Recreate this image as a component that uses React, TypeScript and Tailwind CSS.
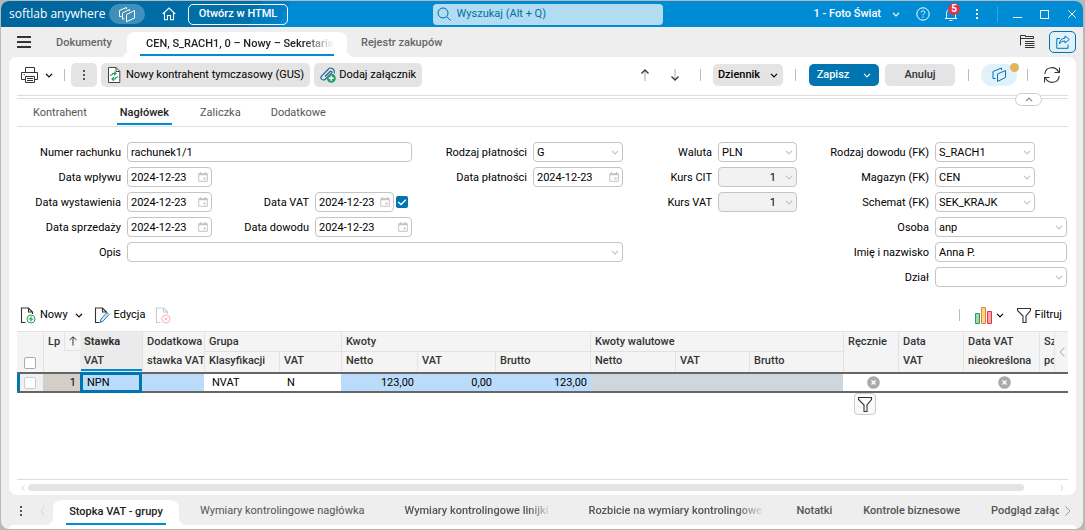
import type { ReactNode } from "react";
import clsx from "clsx";

const Chevron = ({ className = "" }: { className?: string }) => (
    <svg viewBox="0 0 8 5" className={clsx("w-2 h-[5px] shrink-0", className)} fill="none" stroke="currentColor" strokeWidth="1.2">
        <path d="M1 .8 4 3.8 7 .8" />
    </svg>
);

const Layers = ({ className = "" }: { className?: string }) => (
    <svg viewBox="0 0 18 17" className={clsx("w-[18px] h-[17px]", className)} fill="none" stroke="currentColor" strokeWidth="1">
        <path d="M3.500 10.500H1.500V4.500L8.500 1.500V3" />
        <path d="M6.500 13H4.500V7L11.500 3.500V5" />
        <path d="M8.500 8.500 16.500 4.500V12L8.500 15.800Z" />
    </svg>
);

const Funnel = () => (
    <svg viewBox="0 0 16 17" className="w-4 h-[17px]" fill="none" stroke="#333" strokeWidth="1.1">
        <path d="M1.500 1.500H14.500V3.500L10 9V15.500H7V9L1.500 3.500Z" />
    </svg>
);

const Calendar = () => (
    <svg viewBox="0 0 10 10" className="pointer-events-none absolute right-1 top-[5px] size-[10px]" fill="none" stroke="#c4c4c4">
        <path d="M.7 1.700H9.300V9.300H.7Z" />
        <path d="M.7 2.500H9.300" strokeWidth="1.500" />
        <path d="M2.500 0V2M7.500 0V2" />
        <path d="M5.500 5.500H7.500V7.500H5.500Z" fill="#c4c4c4" stroke="none" />
    </svg>
);

const Clear = () => (
    <svg viewBox="0 0 13 13" className="mx-auto size-[13px]">
        <circle cx="6.5" cy="6.5" r="6.3" fill="#aaa" />
        <path d="M4.500 4.500 8.500 8.500M8.500 4.500 4.500 8.500" stroke="#fff" strokeWidth="1.4" />
    </svg>
);

const Page = ({ muted = false, children }: { muted?: boolean; children?: ReactNode }) => (
    <svg viewBox="0 0 16 17" className="w-4 h-[17px] shrink-0" fill="none">
        <path d="M5.500 15.500H1.500V1H8.500L12.500 5V7M8.500 1V5H12.500" stroke={muted ? "#ccc" : "#333"} strokeWidth="1.1" />
        {children}
    </svg>
);

const Separator = ({ className = "" }: { className?: string }) => (
    <span className={clsx("h-3 w-px shrink-0 bg-[#bbb]", className)} />
);

const Label = ({ id, className, children }: { id: string; className: string; children: string }) => (
    <label htmlFor={id} className={clsx("pt-px pr-[6px] text-right leading-5 whitespace-nowrap", className)}>{children}</label>
);

const box = "block h-5 w-full rounded-[4px] border border-[#c4c4c4] px-[3px] text-black outline-none";

const TextField = ({ id, value, className }: { id: string; value: string; className: string }) => (
    <input id={id} defaultValue={value} className={clsx(box, "bg-white", className)} />
);

const DateField = ({ id, className }: { id: string; className: string }) => (
    <div className={clsx("relative", className)}>
        <input id={id} defaultValue="2024-12-23" className={clsx(box, "bg-white")} />
        <Calendar />
    </div>
);

const SelectField = ({ id, value, className, disabled = false }: { id: string; value: string; className: string; disabled?: boolean }) => (
    <div className={clsx("relative", className)}>
        <select id={id} disabled={disabled} className={clsx(box, "appearance-none pt-px", disabled ? "bg-[#f2f2f2] pr-5 opacity-100 [text-align-last:right]" : "bg-white")}>
            <option>{value}</option>
        </select>
        <Chevron className="pointer-events-none absolute right-1 top-2 text-[#c4c4c4]" />
    </div>
);

const TitleBar = () => (
    <header className="flex h-[26px] shrink-0 items-center bg-[linear-gradient(115deg,#00649b_0,#0071ab_235px,#007abb_236px,#0082c8_262px,#008cd5_263px)] pr-[7px] pl-2 text-white">
        <span className="w-[100px] font-['Open_Sans',sans-serif] text-xs whitespace-nowrap">softlab anywhere</span>
        <button aria-label="Moduły" className="flex h-5 w-9 items-center justify-center rounded-full bg-white/25">
            <Layers />
        </button>
        <a href="#" aria-label="Start" className="ml-[17px]">
            <svg viewBox="0 0 14 14" className="size-[14px]" fill="none" stroke="currentColor" strokeWidth="1.1">
                <path d="M.7 7 7 1 13.300 7M2.500 5.500V12.800H5.500V8.500H8.500V12.800H11.500V5.500" />
            </svg>
        </a>
        <button className="ml-3 h-[21px] w-[100px] rounded-[5px] border border-white font-medium">Otwórz w HTML</button>
        <div className="mr-[151px] ml-auto flex h-[21px] w-[230px] items-center rounded-[4px] bg-[#b1dcf2] pl-1 text-[#006fa8]">
            <svg viewBox="0 0 14 14" className="size-[14px] shrink-0" fill="none" stroke="currentColor" strokeWidth="1">
                <circle cx="6" cy="6" r="5" />
                <path d="M9.700 9.700 13.500 13.500" />
            </svg>
            <input aria-label="Wyszukaj" placeholder="Wyszukaj (Alt + Q)" className="ml-[6px] w-full bg-transparent outline-none placeholder:text-[#006fa8]" />
        </div>
        <button className="flex items-center gap-[11px] font-medium">
            1 - Foto Świat
            <Chevron />
        </button>
        <button aria-label="Pomoc" className="ml-4">
            <svg viewBox="0 0 14 14" className="size-[14px]" fill="none" stroke="currentColor">
                <circle cx="7" cy="7" r="6.2" />
                <path d="M5.200 5.500C5.200 3.200 8.800 3.200 8.800 5.300 8.800 6.800 7 6.800 7 8.300M7 9.500V10.700" />
            </svg>
        </button>
        <button aria-label="Powiadomienia" className="relative ml-[14px]">
            <svg viewBox="0 0 14 16" className="h-4 w-[14px]" fill="none" stroke="currentColor">
                <path d="M1 12.500H13M2.500 12.500V7.500C2.500 4.500 4.500 3 7 3S11.500 4.500 11.500 7.500V12.500M5.500 14.500H8.500" />
            </svg>
            <span className="absolute -top-[3px] left-[4px] flex size-3 items-center justify-center rounded-full bg-[#dc3545] text-[10px] font-bold">5</span>
        </button>
        <button aria-label="Więcej" className="ml-[17px]">
            <svg viewBox="0 0 4 12" className="h-3 w-1" fill="currentColor">
                <path d="M1 1H3V3H1ZM1 5H3V7H1ZM1 9H3V11H1Z" />
            </svg>
        </button>
        <span className="ml-[18px] h-4 w-px bg-white/20" />
        <button aria-label="Minimalizuj" className="ml-[15px] h-2 w-[9px] border-b border-white" />
        <button aria-label="Maksymalizuj" className="ml-[18px] size-[9px] border border-white" />
        <button aria-label="Zamknij" className="ml-[19px]">
            <svg viewBox="0 0 8 8" className="size-2" stroke="currentColor">
                <path d="M.3.3 7.700 7.700M7.700.3.3 7.700" />
            </svg>
        </button>
    </header>
);

const flare = "before:absolute before:-left-2 before:bottom-0 before:size-2 before:rounded-br-lg before:bg-[#eee] before:shadow-[4px_4px_0_0_#fff] after:absolute after:-right-2 after:bottom-0 after:size-2 after:rounded-bl-lg after:bg-[#eee] after:shadow-[-4px_4px_0_0_#fff]";
const fade = "overflow-hidden [mask-image:linear-gradient(to_right,#000_84%,transparent)]";

const DocumentTabs = () => (
    <nav className="flex h-[30px] shrink-0 items-center pr-[7px] pl-4 font-medium text-[#666]">
        <button aria-label="Menu" className="flex w-[14px] flex-col gap-[3px]">
            <span className="h-[2px] w-full bg-[#333]" />
            <span className="h-[2px] w-full bg-[#333]" />
            <span className="h-[2px] w-full bg-[#333]" />
        </button>
        <a href="#" className="ml-[25px] w-[71px] pt-[2px]">Dokumenty</a>
        <div className={clsx("relative h-[25px] w-[220px] self-end rounded-t-lg bg-white px-[13px]", flare)}>
            <a href="#" className={clsx("relative z-10 block h-[22px] pl-[6px] leading-[23px] whitespace-nowrap text-[#222]", fade)}>CEN, S_RACH1, 0 – Nowy – Sekretariat</a>
            <span className="relative z-10 block h-[2px] bg-[#008cd5]" />
        </div>
        <a href="#" className="ml-[14px] pt-[2px]">Rejestr zakupów</a>
        <button aria-label="Lista okien" className="ml-auto">
            <svg viewBox="0 0 15 14" className="h-[14px] w-[15px]" fill="none" stroke="#333">
                <path d="M.5 10.500V.5H5.500V2M.5 3.500H13.500V1.500H5.500M5 6.500H14.500M5 8.500H14.500M5 10.500H14.500M5 12.500H14.500" />
            </svg>
        </button>
        <button aria-label="Udostępnij" className="ml-[14px] flex h-[22px] w-[27px] items-center justify-center rounded-[5px] border border-[#0075b0] bg-[#e0f1fa] text-[#0075b0]">
            <svg viewBox="0 0 14 14" className="size-[14px]" fill="none" stroke="currentColor">
                <path d="M4 3.500H.8V13.300H12V9.500M9 1 13.300 4.500 9 8V6C6 6 4.500 7 3.500 9 3.500 5.500 5.500 3.300 9 3.200Z" />
            </svg>
        </button>
    </nav>
);

const gray = "flex items-center justify-center rounded-[5px] bg-[#e4e4e4]";

const Toolbar = () => (
    <div className="flex h-9 items-center pr-4 pl-3 text-black">
        <button aria-label="Drukuj" className="flex items-center gap-[7px]">
            <svg viewBox="0 0 17 16" className="h-4 w-[17px]" fill="none" stroke="#333">
                <path d="M4.500 5.500V.5H13.500V5.500M4.500 12.500H.5V5.500H16.500V12.500H13.500M4.500 9.500H13.500V15.500H4.500ZM6 11.500H12M6 13.500H12" />
                <path d="M2.500 7.500H4" stroke="#0086d0" />
            </svg>
            <Chevron />
        </button>
        <Separator className="ml-[11px]" />
        <button aria-label="Więcej" className={clsx(gray, "ml-[6px] h-6 w-[26px]")}>
            <svg viewBox="0 0 2 10" className="h-[10px] w-[2px]" fill="#555">
                <path d="M0 0H2V2H0ZM0 4H2V6H0ZM0 8H2V10H0Z" />
            </svg>
        </button>
        <button className={clsx(gray, "ml-1 h-6 gap-[5px] px-[6px] whitespace-nowrap")}>
            <svg viewBox="0 0 14 16" className="h-4 w-[14px] shrink-0" fill="none">
                <path d="M1.500.5H9L12.800 4.300V15.500H1.500Z" fill="#fff" stroke="#444" />
                <path d="M9 .5V4.500H12.800" stroke="#444" />
                <path d="M8.500 5 5.500 6 6 8.500M5.300 7.800 8.500 8.800M5.500 12.800 8.800 12 8.300 9.500M9 10.200 5.800 9.200" stroke="none" />
                <path d="M5.500 7.500V6.500H8.500M7 4.800 9 6.500 7 8.200M8.500 10.500V12H5.500M7 10.200 5 12 7 13.700M3 8.500 5.500 7.500M11 9.700 8.500 10.700" stroke="#2a9d69" strokeWidth="1.200" />
            </svg>
            Nowy kontrahent tymczasowy (GUS)
        </button>
        <button className={clsx(gray, "ml-1 h-6 gap-[3px] px-[6px] whitespace-nowrap")}>
            <svg viewBox="0 0 16 16" className="size-4 shrink-0" fill="none">
                <path d="M5 9.500 10 4.500C11.500 3.500 12.500 5 11.500 6L5.500 12C3 14.500-.5 11.500 1.500 9L8.500 2C11-.5 15.500 2.500 14 6.500" stroke="#1d5f9e" strokeWidth="1.100" />
                <circle cx="11.300" cy="11.300" r="4.500" fill="#2a9d69" />
                <path d="M11.300 8.800V13.800M8.800 11.300H13.800" stroke="#fff" strokeWidth="1.400" />
            </svg>
            Dodaj załącznik
        </button>
        <button aria-label="Poprzedni" className="ml-auto">
            <svg viewBox="0 0 8 12" className="h-3 w-2" fill="none" stroke="#333">
                <path d="M4 1V12" stroke="#aaa" />
                <path d="M.5 4.500 4 1 7.500 4.500" strokeWidth="1.300" />
            </svg>
        </button>
        <button aria-label="Następny" className="ml-[22px]">
            <svg viewBox="0 0 8 12" className="h-3 w-2" fill="none" stroke="#333">
                <path d="M4 0V11" stroke="#aaa" />
                <path d="M.5 7.500 4 11 7.500 7.500" strokeWidth="1.300" />
            </svg>
        </button>
        <Separator className="ml-[21px]" />
        <button className={clsx(gray, "ml-3 h-[22px] w-[70px] gap-[10px] font-medium")}>
            Dziennik
            <Chevron />
        </button>
        <Separator className="ml-3" />
        <button className="ml-[13px] flex h-[22px] w-[70px] items-center justify-center gap-[14px] rounded-[5px] bg-[#0075b0] font-medium text-white">
            Zapisz
            <Chevron />
        </button>
        <button className={clsx(gray, "ml-[6px] h-[22px] w-[70px] font-medium text-[#333]")}>Anuluj</button>
        <Separator className="ml-[13px]" />
        <button aria-label="Panele" className="relative ml-3 flex h-[22px] w-9 items-center justify-center rounded-full bg-[#e0f1fa] text-[#0075b0]">
            <svg viewBox="0 0 15 16" className="h-4 w-[15px]" fill="none" stroke="currentColor">
                <path d="M3.500 11.500H1V4.500L9.500 1V3M5.500 7 13.500 3.500V10.500L5.500 14.500Z" />
            </svg>
            <span className="absolute -top-px -right-[2px] size-[9px] rounded-full bg-[#e3b45c]" />
        </button>
        <Separator className="ml-[10px]" />
        <button aria-label="Odśwież" className="ml-4">
            <svg viewBox="0 0 16 16" className="size-4" fill="none" stroke="#333" strokeWidth="1.100">
                <path d="M.8 7C1.500-.5 11.500-1.500 14.500 5M15.500.5V5.500H10.500M15.200 9C14.500 16.500 4.500 17.500 1.500 11M.5 15.500V10.500H5.500" />
            </svg>
        </button>
    </div>
);

const SectionTabs = () => (
    <div className="relative mx-2 mt-[2px] border-t border-[#ddd] pt-[2px]">
        <nav className="flex h-[29px] items-stretch border-y border-[#ddd] pl-4 leading-7 text-[#555]">
            <a href="#">Kontrahent</a>
            <a href="#" className="ml-[30px] block h-[26px] border-b-2 border-[#008cd5] px-[3px] font-medium text-[#222]">Nagłówek</a>
            <a href="#" className="ml-7">Zaliczka</a>
            <a href="#" className="ml-[30px]">Dodatkowe</a>
        </nav>
        <button aria-label="Zwiń" className="absolute -top-[3px] right-[26px] flex h-[13px] w-[27px] items-center justify-center rounded-full border border-[#ccc] bg-white">
            <Chevron className="rotate-180 text-[#888]" />
        </button>
    </div>
);

const HeaderForm = () => (
    <form className="mr-[9px] ml-2 mt-[15px] grid auto-rows-[20px] grid-cols-[110px_85px_103px_97px_121px_90px_95px_79px_minmax(0,1fr)_132px] gap-y-[5px] text-black">
        <Label id="number" className="col-start-1 row-start-1">Numer rachunku</Label>
        <TextField id="number" value="rachunek1/1" className="col-span-3 col-start-2 row-start-1" />
        <Label id="received" className="col-start-1 row-start-2">Data wpływu</Label>
        <DateField id="received" className="col-start-2 row-start-2" />
        <Label id="issued" className="col-start-1 row-start-3">Data wystawienia</Label>
        <DateField id="issued" className="col-start-2 row-start-3" />
        <Label id="sold" className="col-start-1 row-start-4">Data sprzedaży</Label>
        <DateField id="sold" className="col-start-2 row-start-4" />
        <Label id="description" className="col-start-1 row-start-5">Opis</Label>
        <SelectField id="description" value="" className="col-span-5 col-start-2 row-start-5" />

        <Label id="vatDate" className="col-start-3 row-start-3">Data VAT</Label>
        <div className="col-start-4 row-start-3 flex items-center gap-[2px]">
            <DateField id="vatDate" className="w-[79px]" />
            <span className="relative size-3">
                <input type="checkbox" defaultChecked aria-label="Data VAT aktywna" className="block size-3 appearance-none rounded-[2px] bg-[#0075b0]" />
                <svg viewBox="0 0 12 12" className="pointer-events-none absolute inset-0 size-3" fill="none" stroke="#fff" strokeWidth="1.400">
                    <path d="M2.200 6 5 8.500 9.800 3.700" />
                </svg>
            </span>
        </div>
        <Label id="proofDate" className="col-start-3 row-start-4">Data dowodu</Label>
        <DateField id="proofDate" className="col-start-4 row-start-4" />

        <Label id="payment" className="col-start-5 row-start-1">Rodzaj płatności</Label>
        <SelectField id="payment" value="G" className="col-start-6 row-start-1" />
        <Label id="paymentDate" className="col-start-5 row-start-2">Data płatności</Label>
        <DateField id="paymentDate" className="col-start-6 row-start-2" />

        <Label id="currency" className="col-start-7 row-start-1">Waluta</Label>
        <SelectField id="currency" value="PLN" className="col-start-8 row-start-1" />
        <Label id="citRate" className="col-start-7 row-start-2">Kurs CIT</Label>
        <SelectField id="citRate" value="1" disabled className="col-start-8 row-start-2" />
        <Label id="vatRate" className="col-start-7 row-start-3">Kurs VAT</Label>
        <SelectField id="vatRate" value="1" disabled className="col-start-8 row-start-3" />

        <Label id="proofType" className="col-start-9 row-start-1">Rodzaj dowodu (FK)</Label>
        <SelectField id="proofType" value="S_RACH1" className="col-start-10 row-start-1 w-[100px]" />
        <Label id="store" className="col-start-9 row-start-2">Magazyn (FK)</Label>
        <SelectField id="store" value="CEN" className="col-start-10 row-start-2 w-[100px]" />
        <Label id="schema" className="col-start-9 row-start-3">Schemat (FK)</Label>
        <SelectField id="schema" value="SEK_KRAJK" className="col-start-10 row-start-3 w-[100px]" />
        <Label id="person" className="col-start-9 row-start-4">Osoba</Label>
        <SelectField id="person" value="anp" className="col-start-10 row-start-4" />
        <Label id="fullName" className="col-start-9 row-start-5">Imię i nazwisko</Label>
        <TextField id="fullName" value="Anna P." className="col-start-10 row-start-5" />
        <Label id="department" className="col-start-9 row-start-6">Dział</Label>
        <SelectField id="department" value="" className="col-start-10 row-start-6" />
    </form>
);

const GridToolbar = () => (
    <div className="mx-2 mt-4 flex h-6 items-center pr-[6px] pl-[3px] text-black">
        <button className="flex items-center gap-1">
            <Page>
                <circle cx="11" cy="12" r="4" stroke="#2a9d57" />
                <path d="M11 9.500V14.500M8.500 12H13.500" stroke="#2a9d57" strokeWidth="1.200" />
            </Page>
            Nowy
            <Chevron className="ml-[3px]" />
        </button>
        <button className="ml-[11px] flex items-center gap-1">
            <Page>
                <path d="M6 15.500 7 12 13 5.500 15 7.500 9 14.200Z" stroke="#1f77c0" fill="#cfe8fa" />
            </Page>
            Edycja
        </button>
        <button aria-label="Usuń" disabled className="ml-[10px]">
            <Page muted>
                <circle cx="11" cy="12" r="4" stroke="#f5b5b5" />
                <path d="M9.500 10.500 12.500 13.500M12.500 10.500 9.500 13.500" stroke="#f5b5b5" />
            </Page>
        </button>
        <Separator className="ml-auto" />
        <button aria-label="Wykres" className="ml-[15px] flex items-center gap-1">
            <svg viewBox="0 0 17 17" className="size-[17px]">
                <path d="M.5 6.500H4.500V16.500H.5Z" fill="#9ed8b2" stroke="#2a9d57" />
                <path d="M6.500.5H10.500V16.500H6.500Z" fill="#fbd38a" stroke="#e8833a" />
                <path d="M12.500 4.500H16.500V16.500H12.500Z" fill="#f6a6ab" stroke="#dc3545" />
            </svg>
            <Chevron />
        </button>
        <button className="ml-3 flex items-center gap-[3px]">
            <Funnel />
            Filtruj
        </button>
    </div>
);

const head = "overflow-hidden border-t border-l border-[#e2e2e2] p-0 text-left font-medium whitespace-nowrap";
const th = clsx(head, "align-top");

const StackedHead = ({ lines, className = "" }: { lines: string[]; className?: string }) => (
    <th rowSpan={2} className={clsx(th, className)}>
        <span className="block h-[19px] pl-1 leading-[19px]">{lines[0]}</span>
        <span className="block h-5 pl-1 leading-[19px]">{lines[1]}</span>
    </th>
);

const groups = [
    { title: "Grupa", columns: ["Klasyfikacji", "VAT"] },
    { title: "Kwoty", columns: ["Netto", "VAT", "Brutto"] },
    { title: "Kwoty walutowe", columns: ["Netto", "VAT", "Brutto"] },
];

const td = "h-[21px] border-y-2 border-[#666] p-0 leading-[17px]";

const VatTable = () => (
    <table className="mx-2 mt-1 w-[calc(100%-16px)] table-fixed border-separate border-spacing-0 text-black">
        <colgroup>
            <col className="w-[26px]" />
            <col className="w-[37px]" />
            <col className="w-[62px]" />
            <col className="w-[62px]" />
            <col className="w-[75px]" />
            <col className="w-[62px]" />
            <col className="w-[76px]" />
            <col className="w-[78px]" />
            <col className="w-[95px]" />
            <col className="w-[85px]" />
            <col className="w-[74px]" />
            <col className="w-[94px]" />
            <col className="w-[55px]" />
            <col className="w-[65px]" />
            <col className="w-[76px]" />
            <col className="w-[15px]" />
            <col />
        </colgroup>
        <thead className="bg-[#f4f4f4] text-[#333]">
            <tr className="h-5">
                <th rowSpan={2} className="border-t border-[#e2e2e2] p-0 align-bottom">
                    <input type="checkbox" aria-label="Zaznacz wszystkie" className="mx-auto mb-[3px] block size-3 appearance-none rounded-[2px] border border-[#aaa] bg-white" />
                </th>
                <th rowSpan={2} className={th}>
                    <span className="flex h-[19px]">
                        <span className="w-5 pl-1 leading-[19px]">Lp</span>
                        <span className="flex flex-1 items-center justify-center border-b border-l border-[#e2e2e2]">
                            <svg viewBox="0 0 10 10" className="size-[10px]" fill="none" stroke="#333">
                                <path d="M1.500 4 5 .8 8.500 4M5 1V9.500" />
                            </svg>
                        </span>
                    </span>
                </th>
                <th rowSpan={2} className={clsx(th, "border-l-[#eee] bg-[#ebebeb]")}>
                    <span className="block h-[19px] pl-[3px] leading-[19px] font-bold">Stawka</span>
                    <span className="block h-5 border-b-2 border-[#008cd5] pl-[3px] leading-[19px]">VAT</span>
                </th>
                <StackedHead lines={["Dodatkowa", "stawka VAT"]} />
                {groups.map((group) => (
                    <th key={group.title} colSpan={group.columns.length} className={clsx(th, "pl-1 leading-[19px]")}>{group.title}</th>
                ))}
                <StackedHead lines={["Ręcznie", ""]} />
                <StackedHead lines={["Data", "VAT"]} />
                <StackedHead lines={["Data VAT", "nieokreślona"]} />
                <StackedHead lines={["Sz", "po"]} />
                <th rowSpan={2} className={clsx(head, "align-middle")}>
                    <button aria-label="Zwiń kolumny" className="mx-auto block">
                        <svg viewBox="0 0 6 10" className="h-[10px] w-[6px]" fill="none" stroke="#aaa">
                            <path d="M5.500.5 1 5 5.500 9.500" />
                        </svg>
                    </button>
                </th>
            </tr>
            <tr className="h-[21px]">
                {groups.flatMap((group) =>
                    group.columns.map((column) => (
                        <th key={group.title + column} className={clsx(th, "pl-1 leading-[18px]")}>{column}</th>
                    ))
                )}
            </tr>
        </thead>
        <tbody>
            <tr>
                <td className={clsx(td, "bg-[#f0f0f0]")}>
                    <span className="flex h-[17px] items-center border-l-[3px] border-[#0075b0] pl-1">
                        <input type="checkbox" aria-label="Zaznacz wiersz" className="block size-3 appearance-none rounded-[2px] border border-[#ccc] bg-white" />
                    </span>
                </td>
                <td className={clsx(td, "bg-[#d3cec7] pr-1 text-right")}>1</td>
                <td className="h-[21px] border-[3px] border-[#0075b0] bg-[#badcfa] p-0 pl-1 leading-[15px]">NPN</td>
                <td className={clsx(td, "bg-[#badcfa]")} />
                <td className={clsx(td, "pl-2")}>NVAT</td>
                <td className={clsx(td, "pl-2")}>N</td>
                <td className={clsx(td, "bg-[#badcfa] pr-[3px] text-right")}>123,00</td>
                <td className={clsx(td, "bg-[#badcfa] pr-[3px] text-right")}>0,00</td>
                <td className={clsx(td, "bg-[#badcfa] pr-[3px] text-right")}>123,00</td>
                <td colSpan={3} className={clsx(td, "bg-[#ced6de]")} />
                <td className={clsx(td, "relative")}>
                    <span className="block pl-[6px]"><Clear /></span>
                    <button aria-label="Filtruj kolumnę" className="absolute top-[19px] left-[11px] flex size-[22px] items-center justify-center rounded-[4px] border border-[#ccc] bg-[#fafafa]">
                        <Funnel />
                    </button>
                </td>
                <td className={td} />
                <td className={td}>
                    <span className="block pl-[6px]"><Clear /></span>
                </td>
                <td className={td} />
                <td className={td} />
            </tr>
        </tbody>
    </table>
);

const ScrollBar = () => (
    <div className="mx-2 mt-auto flex h-4 items-center border-t border-[#ddd] px-1">
        <svg viewBox="0 0 4 6" className="h-[6px] w-1" fill="none" stroke="#ccc">
            <path d="M3.500.5 1 3 3.500 5.500" />
        </svg>
        <span className="mr-9 ml-[3px] h-[7px] flex-1 rounded-full bg-[#e4e4e4]" />
        <svg viewBox="0 0 4 6" className="h-[6px] w-1" fill="none" stroke="#ccc">
            <path d="M.5.5 3 3 .5 5.500" />
        </svg>
    </div>
);

const BottomTabs = () => (
    <nav className="flex h-[30px] shrink-0 items-center overflow-hidden pt-[2px] pr-3 pl-[19px] leading-7 font-medium whitespace-nowrap text-[#555]">
        <button aria-label="Więcej zakładek">
            <svg viewBox="0 0 2 10" className="h-[10px] w-[2px]" fill="#555">
                <path d="M0 0H2V2H0ZM0 4H2V6H0ZM0 8H2V10H0Z" />
            </svg>
        </button>
        <button aria-label="Poprzednie zakładki" disabled className="ml-[18px]">
            <svg viewBox="0 0 5 10" className="h-[10px] w-[5px]" fill="none" stroke="#d5d5d5">
                <path d="M4.500.5 1 5 4.500 9.500" />
            </svg>
        </button>
        <div className={clsx("relative ml-2 h-[25px] w-[126px] shrink-0 self-end rounded-t-lg bg-white px-[13px]", flare)}>
            <a href="#" className="relative z-10 block h-[23px] text-center leading-[23px] text-[#222]">Stopka VAT - grupy</a>
            <span className="relative z-10 block h-[2px] bg-[#008cd5]" />
        </div>
        <a href="#" className="ml-[21px] font-normal">Wymiary kontrolingowe nagłówka</a>
        <a href="#" className={clsx("ml-10 w-[148px] shrink-0", fade)}>Wymiary kontrolingowe linijki</a>
        <a href="#" className={clsx("ml-9 w-[177px] shrink-0", fade)}>Rozbicie na wymiary kontrolingowe</a>
        <a href="#" className="ml-[31px]">Notatki</a>
        <a href="#" className="ml-[31px]">Kontrole biznesowe</a>
        <a href="#" className="ml-[31px] w-0 min-w-0 flex-1 overflow-hidden">Podgląd załączników</a>
        <button aria-label="Następne zakładki" className="ml-[6px] shrink-0">
            <svg viewBox="0 0 6 10" className="h-[10px] w-[6px]" fill="none" stroke="#999">
                <path d="M.5.5 5 5 .5 9.500" />
            </svg>
        </button>
    </nav>
);

export default function App() {
    return (
        <div className="flex min-h-screen flex-col bg-[#b8b8b8] pt-px pr-[2px] pb-px pl-px font-[Roboto,sans-serif] text-[11px] leading-4">
            <div className="flex flex-1 flex-col overflow-hidden rounded-lg bg-[#eee]">
                <TitleBar />
                <DocumentTabs />
                <main className="mr-[7px] ml-2 flex flex-1 flex-col rounded-lg bg-white">
                    <Toolbar />
                    <SectionTabs />
                    <HeaderForm />
                    <GridToolbar />
                    <VatTable />
                    <ScrollBar />
                </main>
                <BottomTabs />
                <div className="mr-[7px] ml-2 h-1 shrink-0 rounded-t-lg bg-white" />
            </div>
        </div>
    );
}
